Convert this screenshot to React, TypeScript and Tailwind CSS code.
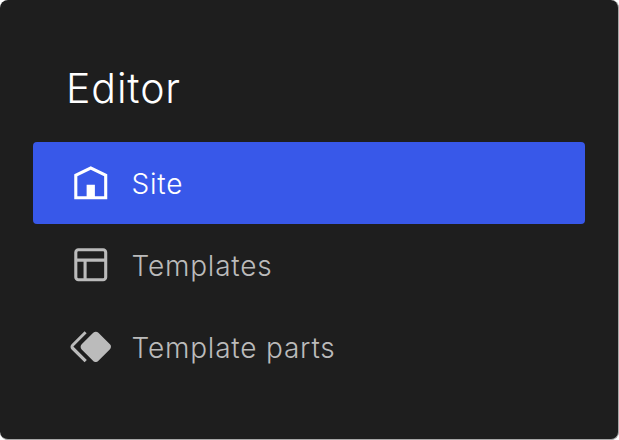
import React from 'react';

const items = [
  {
    label: 'Site',
    active: true,
    d: 'M12 4L4 7.9V20h16V7.9L12 4zm6.5 14.5H14V13h-4v5.5H5.5V8.8L12 5.7l6.5 3.1v9.7z',
  },
  {
    label: 'Templates',
    active: false,
    d: 'M18 5.5H6a.5.5 0 00-.5.5v3h13V6a.5.5 0 00-.5-.5zm.5 5H10v8h8a.5.5 0 00.5-.5v-7.5zm-10 0h-3V18a.5.5 0 00.5.5h2.5v-8zM6 4h12a2 2 0 012 2v12a2 2 0 01-2 2H6a2 2 0 01-2-2V6a2 2 0 012-2z',
  },
  {
    label: 'Template parts',
    active: false,
    d: 'M21.3 10.8l-5.6-5.6c-.7-.7-1.8-.7-2.5 0l-5.6 5.6c-.7.7-.7 1.8 0 2.5l5.6 5.6c.3.3.8.5 1.2.5s.9-.2 1.2-.5l5.6-5.6c.8-.7.8-1.9.1-2.5zm-17.6 1L10 5.5l-1-1-6.3 6.3c-.7.7-.7 1.8 0 2.5L9 19.5l1.1-1.1-6.3-6.3c-.2 0-.2-.2-.1-.3z',
  },
];

export default function App() {
  return (
    <div className="w-[619px] h-[440px] bg-white font-['Inter',sans-serif]">
      <div className="h-full rounded-lg border-r border-b border-[#a8a8a8] bg-[#1e1e1e] pl-[33px] pr-[33px] pt-[64px]">
        <h1 className="pl-[33px] text-[41px] leading-[48px] font-[350] tracking-[0.9px] text-white">Editor</h1>
        <nav className="mt-[30px] flex flex-col">
          {items.map(item => (
            <a
              key={item.label}
              className={`flex h-[82px] items-center gap-[16px] rounded-[4px] pl-[33px] text-[28px] font-[350] tracking-[0.8px] ${
                item.active ? 'bg-[#3858e9] text-white' : 'text-[#bbbbbb]'
              }`}
            >
              <svg viewBox="0 0 24 24" fill="currentColor" className="h-[49.5px] w-[49.5px] shrink-0">
                <path d={item.d} />
              </svg>
              <span className="pt-[2px]">{item.label}</span>
            </a>
          ))}
        </nav>
      </div>
    </div>
  );
}
